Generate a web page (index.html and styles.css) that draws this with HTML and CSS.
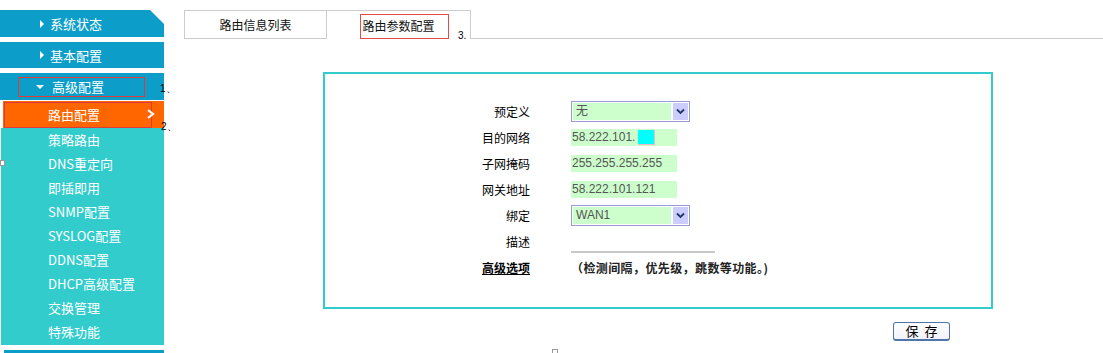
FILE: index.html
```html
<!DOCTYPE html>
<html>
<head>
	<title>路由配置</title>
	<meta charset="utf-8">
	<link rel="stylesheet" href="styles.css">
</head>
<body>
  <div class="page">
    <aside class="side">
      <div class="menu-head first"><span class="tri"></span>系统状态</div>
      <div class="menu-head second"><span class="tri"></span>基本配置</div>
      <div class="menu-head open">
        <span class="hl"><span class="tri down"></span>高级配置</span>
        <span class="note n1">1、</span>
      </div>
      <div class="sub-current">
        <span class="hl-box"></span>
        路由配置
        <svg class="chev" width="8" height="10" viewBox="0 0 8 10">
          <path d="M1 1 L6 5 L1 9" fill="none" stroke="#fff" stroke-width="2.2"/>
        </svg>
        <span class="note n2">2、</span>
      </div>
      <ul class="sub-list">
        <li>策略路由</li>
        <li>DNS重定向<span class="stray"></span></li>
        <li>即插即用</li>
        <li>SNMP配置</li>
        <li>SYSLOG配置</li>
        <li>DDNS配置</li>
        <li>DHCP高级配置</li>
        <li>交换管理</li>
        <li>特殊功能</li>
      </ul>
      <div class="menu-head tail"></div>
    </aside>

    <main class="main">
      <div class="tabs">
        <div class="tab">路由信息列表</div>
        <div class="tab active">
          路由参数配置
          <span class="tab-box"></span>
          <span class="note n3">3.</span>
        </div>
        <div class="tab-rest"></div>
      </div>

      <div class="panel">
        <div class="form">
          <label>预定义</label>
          <div class="select">
            <span class="val">无</span>
            <span class="arrow">
              <svg width="9" height="7" viewBox="0 0 9 7"><path d="M1 1.5 L4.5 5 L8 1.5" fill="none" stroke="#223366" stroke-width="1.8"/></svg>
            </span>
          </div>

          <label>目的网络</label>
          <div class="field">58.222.101.<span class="cursor"></span></div>

          <label>子网掩码</label>
          <div class="field">255.255.255.255</div>

          <label>网关地址</label>
          <div class="field">58.222.101.121</div>

          <label>绑定</label>
          <div class="select">
            <span class="val">WAN1</span>
            <span class="arrow">
              <svg width="9" height="7" viewBox="0 0 9 7"><path d="M1 1.5 L4.5 5 L8 1.5" fill="none" stroke="#223366" stroke-width="1.8"/></svg>
            </span>
          </div>

          <label>描述</label>
          <div class="line-field"></div>

          <label class="adv">高级选项</label>
          <div class="adv-text">（检测间隔，优先级，跳数等功能。)</div>
        </div>
      </div>

      <div class="actions">
        <button class="save">保&nbsp;&nbsp;存</button>
      </div>
    </main>
    <span class="stray bottom"></span>
  </div>
</body>
</html>
```

FILE: styles.css
```css
*{
	box-sizing: border-box;
}
body{
	margin: 0;
	background: #fff;
	font-family: "Noto Sans CJK SC", "Liberation Sans", sans-serif;
	font-size: 12px;
	color: #000;
}
.page{
	display: flex;
	width: 1103px;
	height: 353px;
	overflow: hidden;
	position: relative;
}

/* left menu */
.side{
	width: 164px;
	flex: none;
	padding-top: 10px;
}
.menu-head{
	position: relative;
	display: flex;
	align-items: center;
	height: 27px;
	margin-bottom: 5px;
	padding-left: 40px;
	background: #0c9ec9;
	color: #fff;
	font-size: 13px;
}
.menu-head.first{
	clip-path: polygon(0 0, 150px 0, 164px 14px, 164px 100%, 0 100%);
}
.menu-head.second{
	height: 26px;
}
.menu-head.open{
	margin-bottom: 1px;
	padding-left: 18px;
}
.menu-head.tail{
	margin: 5px 0 0 4px;
	height: 10px;
}
.tri{
	width: 0;
	height: 0;
	margin-right: 6px;
	border-left: 4px solid #fff;
	border-top: 4px solid transparent;
	border-bottom: 4px solid transparent;
}
.tri.down{
	margin: 0 8px 0 0;
	border-top: 4px solid #fff;
	border-left: 4px solid transparent;
	border-right: 4px solid transparent;
	border-bottom: 0;
}
.hl{
	display: flex;
	align-items: center;
	width: 127px;
	height: 20px;
	padding-left: 17px;
	border: 1px solid #e03a3a;
}
.note{
	position: absolute;
	font-family: "Liberation Sans", sans-serif;
	font-size: 10px;
	color: #000;
}
.n1{
	left: 160px;
	top: 9px;
}
.sub-current{
	position: relative;
	display: flex;
	align-items: center;
	height: 27px;
	margin-left: 3px;
	padding-left: 45px;
	background: #ff6600;
	color: #fff;
	font-size: 13px;
}
.hl-box{
	position: absolute;
	left: 1px;
	top: 1px;
	width: 148px;
	height: 26px;
	border: 1px solid #e03a3a;
}
.chev{
	position: absolute;
	left: 144px;
	top: 8px;
}
.n2{
	left: 158px;
	top: 19px;
}
.sub-list{
	list-style: none;
	margin: 0 0 0 1px;
	padding: 0 0 0 47px;
	height: 217px;
	background: #33cccc;
}
.sub-list li{
	position: relative;
	height: 24px;
	line-height: 24px;
	color: #fff;
	font-size: 13px;
}
.stray{
	position: absolute;
	left: -48px;
	top: 8px;
	width: 5px;
	height: 6px;
	background: #fff;
	border: 1px solid #999;
}
.stray.bottom{
	left: 552px;
	top: 349px;
	width: 6px;
	height: 8px;
	background: none;
}

/* right side */
.main{
	flex: 1;
	padding: 10px 0 0 20px;
}
.tabs{
	display: flex;
	height: 29px;
}
.tab{
	position: relative;
	display: flex;
	align-items: center;
	justify-content: center;
	width: 143px;
	border: 1px solid #cccccc;
	font-size: 12px;
	color: #111;
}
.tab.active{
	width: 144px;
	border-left: 0;
	border-bottom: 0;
}
.tab-box{
	position: absolute;
	left: 33px;
	top: 3px;
	width: 89px;
	height: 25px;
	border: 1px solid #e84a4a;
}
.n3{
	left: 131px;
	top: 19px;
}
.tab-rest{
	flex: 1;
	border-bottom: 1px solid #cccccc;
}

.panel{
	width: 670px;
	height: 237px;
	margin: 33px 0 0 139px;
	padding-top: 24px;
	border: 2px solid #33cccc;
}
.form{
	display: grid;
	grid-template-columns: 205px auto;
	grid-auto-rows: 26px;
	column-gap: 41px;
	align-items: center;
}
.form label{
	text-align: right;
}
.select{
	display: flex;
	align-items: center;
	justify-content: space-between;
	width: 119px;
	height: 21px;
	padding: 1px;
	border: 1px solid #9a9ad6;
	background: #fff;
}
.select .val{
	flex: 1;
	height: 17px;
	line-height: 17px;
	padding-left: 3px;
	background: #ccffcc;
	color: #555;
	font-family: "Liberation Sans", "Noto Sans CJK SC", sans-serif;
	font-size: 12px;
}
.select .arrow{
	display: flex;
	align-items: center;
	justify-content: center;
	width: 15px;
	height: 17px;
	margin-left: 2px;
	background: #ccccff;
}
.field{
	display: flex;
	align-items: center;
	width: 106px;
	height: 17px;
	padding-left: 1px;
	background: #ccffcc;
	color: #555;
	font-family: "Liberation Sans", sans-serif;
	font-size: 12px;
}
.cursor{
	width: 17px;
	height: 15px;
	margin-left: 3px;
	background: #00ffff;
	border-right: 1px solid #f0b8c8;
	border-bottom: 1px solid #f0b8c8;
}
.line-field{
	width: 144px;
	height: 16px;
	margin-top: 8px;
	border-bottom: 2px solid #c8c8c8;
}
.form .adv{
	font-weight: bold;
	text-decoration: underline;
}
.adv-text{
	font-weight: bold;
	color: #222;
	letter-spacing: 0.4px;
}

.actions{
	margin: 13px 0 0 709px;
}
.save{
	width: 57px;
	height: 19px;
	padding: 0;
	border: 1px solid #4f74a8;
	border-bottom-width: 2px;
	border-radius: 3px;
	background: linear-gradient(#ffffff, #f2f2fa);
	font-family: "Noto Sans CJK SC", sans-serif;
	font-size: 13px;
	line-height: 16px;
	color: #000;
}
```
